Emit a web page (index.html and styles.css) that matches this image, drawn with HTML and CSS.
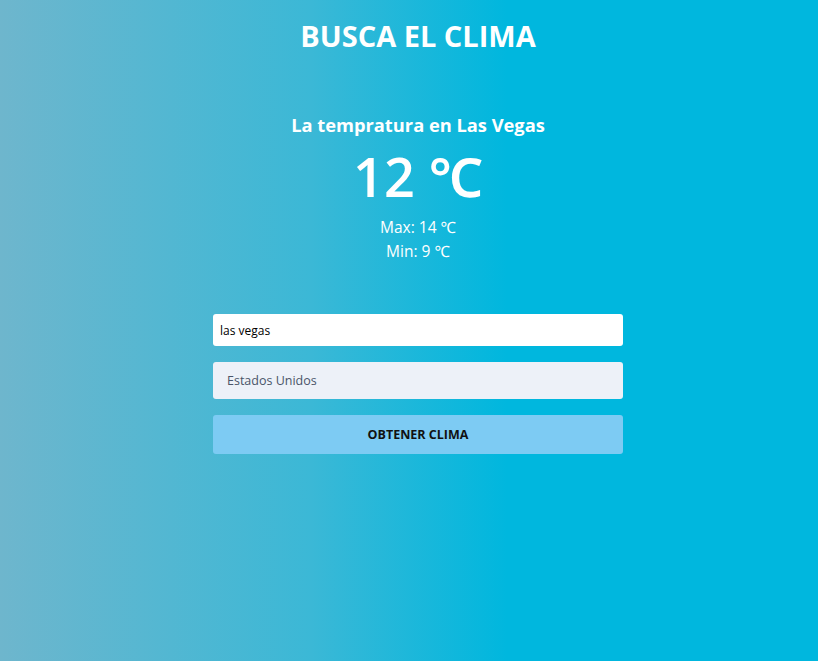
FILE: index.html
```html
<!DOCTYPE html>
<html lang="es">
<head>
<meta charset="utf-8">
<title>Busca el clima</title>
<link rel="stylesheet" href="styles.css">
</head>
<body>
<div class="page">
  <h1 class="title">BUSCA EL CLIMA</h1>
  <section class="result">
    <h2 class="result-heading">La tempratura en Las Vegas</h2>
    <p class="temp">12 ℃</p>
    <div class="ranges">
      <p class="range">Max: 14 ℃</p>
      <p class="range">Min: 9 ℃</p>
    </div>
  </section>
  <form class="form">
    <input class="city" type="text" value="las vegas">
    <div class="country">Estados Unidos</div>
    <button class="submit" type="button">OBTENER CLIMA</button>
  </form>
</div>
</body>
</html>
```
FILE: styles.css
```css
html, body {
  margin: 0;
  height: 100%;
}
body {
  font-family: "Open Sans", "Noto Sans", sans-serif;
  background: linear-gradient(to right, #6eb6cd 0%, #3bb8d6 38%, #00b7de 62%, #00b7de 100%);
  color: #fff;
}
.page {
  display: flex;
  flex-direction: column;
  align-items: center;
  padding-left: 18px;
}
.title {
  margin: 18px 0 0;
  font-size: 29px;
  line-height: 36px;
  font-weight: 700;
}
.result {
  margin-top: 58px;
  display: flex;
  flex-direction: column;
  align-items: center;
}
.result-heading {
  margin: 0;
  font-size: 18.3px;
  line-height: 26px;
  font-weight: 700;
}
.temp {
  margin: 8px 0 0;
  font-size: 54px;
  line-height: 60px;
  font-weight: 600;
}
.ranges {
  margin-top: 9px;
  display: flex;
  flex-direction: column;
  align-items: center;
}
.range {
  margin: 0;
  font-size: 15.5px;
  line-height: 24px;
}
.form {
  margin-top: 51px;
  width: 410px;
  display: flex;
  flex-direction: column;
  gap: 16px;
}
.city {
  box-sizing: border-box;
  height: 32px;
  border: none;
  border-radius: 3px;
  padding: 0 7px;
  font-family: inherit;
  font-size: 12px;
  color: #000;
  background: #fff;
  margin: 0;
}
.country {
  box-sizing: border-box;
  height: 37px;
  border-radius: 3px;
  padding: 0 14px;
  display: flex;
  align-items: center;
  background: #edf1f8;
  color: #4a5568;
  font-size: 12.5px;
}
.submit {
  height: 39px;
  border: none;
  border-radius: 3px;
  background: #7dcbf3;
  color: #111;
  font-family: inherit;
  font-weight: 700;
  font-size: 12.5px;
  margin: 0;
}
```
